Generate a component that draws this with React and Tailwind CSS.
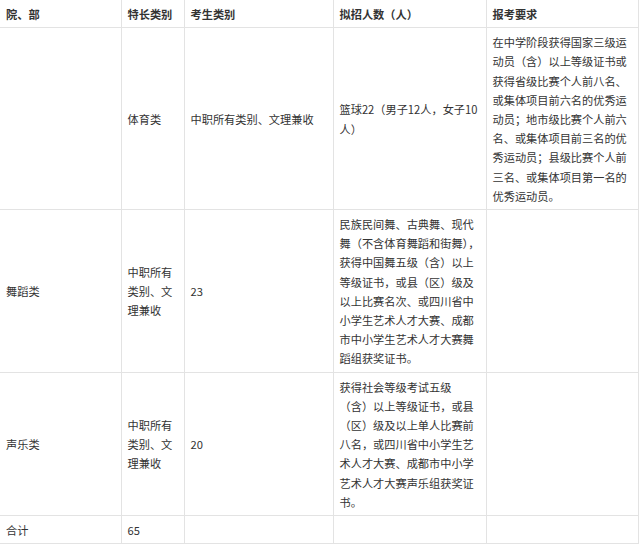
import React from "react";

const cell =
  "border-r border-b border-[#e3e3e3] pl-[6px] pr-[5px] pt-[5px] pb-[3px] align-middle text-left";

export default function App() {
  const rows = [
    {
      a: "",
      b: "体育类",
      c: "中职所有类别、文理兼收",
      d: "篮球22（男子12人，女子10人）",
      e: "在中学阶段获得国家三级运动员（含）以上等级证书或获得省级比赛个人前八名、或集体项目前六名的优秀运动员；地市级比赛个人前六名、或集体项目前三名的优秀运动员；县级比赛个人前三名、或集体项目第一名的优秀运动员。",
    },
    {
      a: "舞蹈类",
      b: "中职所有类别、文理兼收",
      c: "23",
      d: "民族民间舞、古典舞、现代舞（不含体育舞蹈和街舞），获得中国舞五级（含）以上等级证书，或县（区）级及以上比赛名次、或四川省中小学生艺术人才大赛、成都市中小学生艺术人才大赛舞蹈组获奖证书。",
      e: "",
      dTrim: true,
    },
    {
      a: "声乐类",
      b: "中职所有类别、文理兼收",
      c: "20",
      d: "获得社会等级考试五级（含）以上等级证书，或县（区）级及以上单人比赛前八名，或四川省中小学生艺术人才大赛、成都市中小学艺术人才大赛声乐组获奖证书。",
      e: "",
    },
    { a: "合计", b: "65", c: "", d: "", e: "" },
  ];
  return (
    <div
      className="w-[640px] h-[546px] bg-white text-[#333] text-[11.2px] leading-[19.2px] [text-spacing-trim:space-all]"
      style={{ fontFamily: '"Microsoft YaHei", "Noto Sans CJK SC", "Noto Sans", sans-serif' }}
    >
      <table className="w-[638px] table-fixed border-collapse">
        <colgroup>
          <col className="w-[121px]" />
          <col className="w-[63px]" />
          <col className="w-[149px]" />
          <col className="w-[153px]" />
          <col className="w-[152px]" />
        </colgroup>
        <thead>
          <tr>
            <th className={cell + " font-bold"}>院、部</th>
            <th className={cell + " font-bold"}>特长类别</th>
            <th className={cell + " font-bold"}>考生类别</th>
            <th className={cell + " font-bold"}>拟招人数（人）</th>
            <th className={cell + " font-bold"}>报考要求</th>
          </tr>
        </thead>
        <tbody>
          {rows.map((r, i) => (
            <tr key={i}>
              <td className={cell}>{r.a}</td>
              <td className={cell}>{r.b}</td>
              <td className={cell}>{r.c}</td>
              <td className={cell + (r.dTrim ? " [text-spacing-trim:normal]" : "")}>{r.d}</td>
              <td className={cell}>{r.e}</td>
            </tr>
          ))}
        </tbody>
      </table>
    </div>
  );
}
